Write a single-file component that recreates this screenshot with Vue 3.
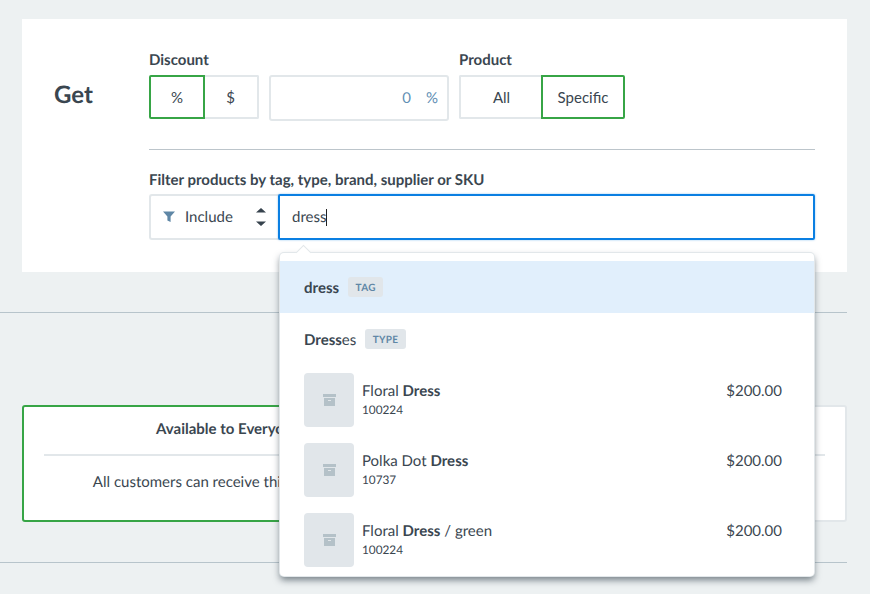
<script setup>
const products = [
  { before: 'Floral ', after: '', sku: '100224', price: '$200.00' },
  { before: 'Polka Dot ', after: '', sku: '10737', price: '$200.00' },
  { before: 'Floral ', after: ' / green', sku: '100224', price: '$200.00' },
];
</script>

<template>
  <div class="page">
    <section class="panel">
      <h2 class="title">Get</h2>
      <div class="form">
        <div class="top-row">
          <div class="field">
            <label>Discount</label>
            <div class="controls">
              <div class="seg">
                <button class="seg-btn pct active">%</button>
                <button class="seg-btn dollar">$</button>
              </div>
              <div class="amount">
                <span>0</span>
                <span class="unit">%</span>
              </div>
            </div>
          </div>
          <div class="field">
            <label>Product</label>
            <div class="seg">
              <button class="seg-btn all">All</button>
              <button class="seg-btn specific active">Specific</button>
            </div>
          </div>
        </div>
        <hr class="divider" />
        <label class="filter-label">Filter products by tag, type, brand, supplier or SKU</label>
        <div class="filter">
          <div class="include">
            <svg class="funnel" width="12" height="12" viewBox="0 0 12 12">
              <path d="M0 .5h12L7.6 5.6V11L4.4 9.4V5.6z" fill="#5f87a6" />
            </svg>
            <span>Include</span>
            <svg class="updown" width="10" height="18" viewBox="0 0 10 18">
              <path d="M5 0l5 4.5H0zM5 18L0 13.5h10z" fill="#36424d" />
            </svg>
          </div>
          <div class="search">dress<i class="caret"></i></div>
          <div class="popover">
            <span class="arrow"></span>
            <div class="option current">
              <b class="text">dress</b><span class="badge">TAG</span>
            </div>
            <div class="option">
              <span class="text"><b>Dress</b>es</span><span class="badge">TYPE</span>
            </div>
            <div class="products">
              <div class="product" v-for="(p, i) in products" :key="i">
                <div class="thumb">
                  <svg width="13" height="12" viewBox="0 0 13 12">
                    <path d="M0 0h13v3H0zM1 4h11v8H1z" fill="#b4c1c8" />
                    <path d="M5 6h3v1H5z" fill="#e1e6ea" />
                  </svg>
                </div>
                <div class="info">
                  <div class="name">{{ p.before }}<b>Dress</b>{{ p.after }}</div>
                  <div class="sku">{{ p.sku }}</div>
                </div>
                <div class="price">{{ p.price }}</div>
              </div>
            </div>
          </div>
        </div>
      </div>
    </section>

    <hr class="rule first" />

    <div class="cards">
      <div class="card selected">
        <h3>Available to Everyone</h3>
        <p>All customers can receive this promotion.</p>
      </div>
      <div class="card">
        <h3>Specific Customers</h3>
        <p>Only selected customers</p>
      </div>
    </div>

    <hr class="rule last" />
  </div>
</template>

<style>
html, body {
  margin: 0;
  background: #edf1f2;
}
</style>

<style scoped>
.page {
  height: 594px;
  box-sizing: border-box;
  padding: 19px 23px 0 22px;
  overflow: hidden;
  font-family: Lato, "Open Sans", sans-serif;
  font-size: 15px;
  color: #3a4650;
  background: #edf1f2;
  text-rendering: geometricPrecision;
}

.panel {
  height: 253px;
  box-sizing: border-box;
  padding: 0 32px;
  display: flex;
  background: #fff;
}

.title {
  width: 95px;
  margin: 61px 0 0;
  font-size: 24px;
  line-height: 30px;
  font-weight: 700;
}

.form {
  flex: 1;
  padding-top: 32px;
}

label {
  display: block;
  font-weight: 700;
  line-height: 18px;
  margin-bottom: 6px;
}

.filter-label {
  margin-bottom: 5px;
}

.top-row {
  display: flex;
  gap: 10px;
}

.controls {
  display: flex;
  gap: 10px;
}

.seg {
  display: flex;
}

.seg-btn {
  height: 44px;
  box-sizing: border-box;
  padding: 0;
  border: 2px solid #e2e7ea;
  background: #fff;
  font: inherit;
  color: inherit;
}

.seg-btn.active {
  border-color: #37a546;
  position: relative;
}

.pct {
  width: 56px;
  border-radius: 2px 0 0 2px;
}

.dollar {
  width: 55px;
  margin-left: -1px;
  border-left: 0;
  border-radius: 0 2px 2px 0;
}

.all {
  width: 83px;
  border-right: 0;
  border-radius: 2px 0 0 2px;
}

.specific {
  width: 84px;
  margin-left: -1px;
  border-radius: 0 2px 2px 0;
}

.amount {
  width: 180px;
  height: 46px;
  box-sizing: border-box;
  padding-right: 9px;
  border: 2px solid #e2e7ea;
  border-radius: 3px;
  display: flex;
  justify-content: flex-end;
  align-items: center;
  gap: 15px;
  color: #5f8fb4;
}

.divider {
  margin: 28px 0 21px;
  border: 0;
  border-top: 1px solid #bcc5cb;
}

.filter {
  position: relative;
  display: flex;
  height: 46px;
}

.include {
  width: 130px;
  box-sizing: border-box;
  padding: 0 13px 0 12px;
  border: 2px solid #e2e7ea;
  border-right: 0;
  border-radius: 3px 0 0 3px;
  display: flex;
  align-items: center;
}

.funnel {
  margin-right: 10px;
}

.updown {
  margin-left: auto;
}

.search {
  flex: 1;
  box-sizing: border-box;
  margin-left: -1px;
  padding-left: 12px;
  border: 2px solid #0a7fe2;
  border-radius: 2px;
  box-shadow: 0 0 2px rgba(10, 127, 226, 0.5);
  display: flex;
  align-items: center;
}

.caret {
  width: 1px;
  height: 17px;
  background: #222;
}

.popover {
  position: absolute;
  z-index: 2;
  top: 59px;
  left: 131px;
  width: 534px;
  height: 323px;
  box-sizing: border-box;
  padding-top: 8px;
  background: #fff;
  border-radius: 4px;
  box-shadow: 0 0 0 1px #e2e7ea, 0 4px 7px rgba(50, 65, 75, 0.65);
}

.arrow {
  position: absolute;
  top: -6px;
  left: 18px;
  width: 10px;
  height: 10px;
  background: #fff;
  border: solid #e2e7ea;
  border-width: 1px 0 0 1px;
  transform: rotate(45deg);
}

.option {
  height: 52px;
  padding-left: 24px;
  display: flex;
  align-items: center;
}

.option .text {
  margin-top: 1px;
}

.option.current {
  background: #e1effc;
}

.option b,
.name b {
  font-weight: 700;
}

.badge {
  margin-left: 9px;
  height: 20px;
  padding: 0 7.5px;
  border-radius: 3px;
  background: #e1e6ea;
  color: #5f87a6;
  font-size: 10px;
  font-weight: 700;
  line-height: 22px;
  letter-spacing: 0.3px;
}

.products {
  padding-top: 8px;
}

.product {
  height: 54px;
  margin: 0 32px 16px 24px;
  display: flex;
  align-items: center;
}

.thumb {
  width: 50px;
  height: 54px;
  margin-right: 8px;
  border-radius: 4px;
  background: #e1e6ea;
  display: flex;
  align-items: center;
  justify-content: center;
}

.name {
  line-height: 20px;
}

.sku {
  font-size: 11.8px;
  line-height: 18px;
}

.price {
  margin-left: auto;
  margin-bottom: 18px;
}

.rule {
  margin: 0 0 0 -22px;
  border: 0;
  border-top: 1px solid #b7c4cb;
}

.rule.first {
  margin-top: 40px;
}

.cards {
  margin-top: 92px;
  display: flex;
}

.card {
  flex: 1;
  height: 117px;
  box-sizing: border-box;
  padding: 0 20px;
  background: #fff;
  border: 2px solid #e2e7ea;
  border-radius: 3px;
  text-align: center;
}

.card.selected {
  border-color: #37a546;
}

.card h3 {
  margin: 0;
  height: 47px;
  border-bottom: 2px solid #e2e7ea;
  font-size: 15px;
  line-height: 44px;
  font-weight: 700;
}

.card p {
  margin: 16px 0 0;
  line-height: 20px;
}

.rule.last {
  margin-top: 40px;
}
</style>
